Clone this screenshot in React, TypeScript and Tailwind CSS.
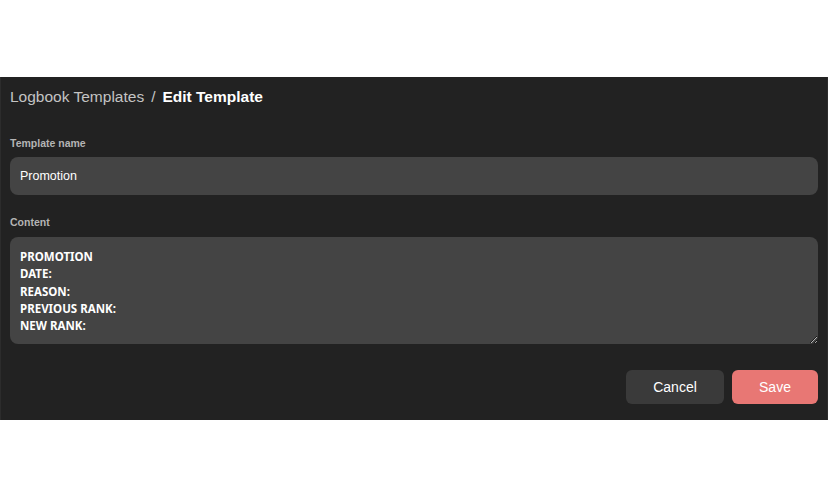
import { useState } from "react"

const CONTENT = `PROMOTION
DATE:
REASON:
PREVIOUS RANK:
NEW RANK:`

export default function App() {
  const [name, setName] = useState("Promotion")
  const [content, setContent] = useState(CONTENT)

  return (
    <div
      className="min-h-screen flex items-center bg-white"
      style={{ fontFamily: "'Liberation Sans', Arial, sans-serif" }}
    >
      <div className="w-full h-[343px] bg-[#222222] border-x border-[#2c2c2c] px-[9px] pt-[10px]">
        {/* breadcrumb */}
        <div className="flex items-center gap-[7px] text-[15.5px] leading-[20px]">
          <span className="text-[#c4c4c4]">Logbook Templates</span>
          <span className="text-[#c4c4c4]">/</span>
          <span className="font-bold text-white">Edit Template</span>
        </div>

        <label className="block mt-[29px] text-[10.5px] font-bold text-[#b4b4b4] leading-[14px]">
          Template name
        </label>
        <input
          value={name}
          onChange={e => setName(e.target.value)}
          className="mt-[7px] block w-full h-[38px] rounded-lg bg-[#444444] px-[10px] text-[12.5px] text-white outline-none"
        />

        <label className="block mt-[20px] text-[10.5px] font-bold text-[#b4b4b4] leading-[14px]">
          Content
        </label>
        <textarea
          value={content}
          onChange={e => setContent(e.target.value)}
          className="mt-[8px] block w-full h-[107px] rounded-lg bg-[#444444] px-[10px] pt-[11px] text-[11.5px] leading-[17.3px] font-bold text-white outline-none"
          style={{ fontFamily: "'Noto Sans', sans-serif" }}
        />

        {/* footer */}
        <div className="flex justify-end gap-[8px] mt-[26px]">
          <button className="w-[98px] h-[34px] rounded-md bg-[#3a3a3a] text-[14px] text-white">
            Cancel
          </button>
          <button className="w-[86px] h-[34px] rounded-md bg-[#e87774] text-[14px] text-white">
            Save
          </button>
        </div>
      </div>
    </div>
  )
}
